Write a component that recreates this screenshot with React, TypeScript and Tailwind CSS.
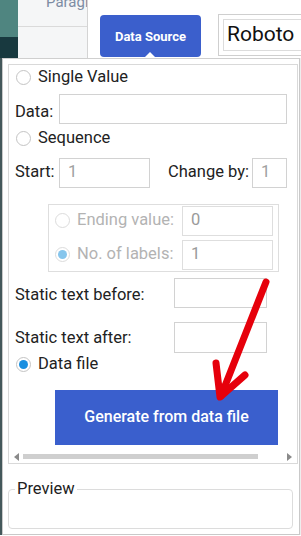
import React from 'react';

function Radio({ checked = false, disabled = false }: { checked?: boolean; disabled?: boolean }) {
  return (
    <span
      className={`w-[15px] h-[15px] shrink-0 rounded-full border flex items-center justify-center bg-white ${
        disabled ? 'border-[#dcdcdc]' : 'border-[#c4c4c4]'
      }`}
    >
      {checked && (
        <span className={`w-[9px] h-[9px] rounded-full ${disabled ? 'bg-[#86c5ec]' : 'bg-[#1a8fe0]'}`} />
      )}
    </span>
  );
}

function Field({ value = '', className = '', disabled = false }: { value?: string; className?: string; disabled?: boolean }) {
  return (
    <div
      className={`h-[30px] border flex items-center px-[8px] text-[16.5px] ${
        disabled ? 'border-[#dedede] text-[#9a9a9a]' : 'border-[#d2d2d2] text-[#a0a0a0]'
      } ${className}`}
    >
      {value}
    </div>
  );
}

// red annotation arrow pointing at the generate button
function RedArrow() {
  return (
    <svg className="absolute left-0 top-0 pointer-events-none" width="301" height="536" viewBox="0 0 301 536">
      <g stroke="#e6000b" strokeWidth="7" strokeLinecap="round" strokeLinejoin="round" fill="none">
        <path d="M266 282 L221 396" />
        <path d="M216 363 L220 397 L245 375" />
      </g>
    </svg>
  );
}

export default function App() {
  return (
    <div className="relative w-[301px] h-[536px] overflow-hidden bg-white font-['Roboto',sans-serif] text-[#222]">
      {/* top toolbar */}
      <div className="flex h-[58px]">
        <div className="w-[18px] flex flex-col">
          <div className="h-[37px] bg-[#4f8580]" />
          <div className="flex-1 bg-[#18393f]" />
        </div>
        <div className="w-[70px] bg-[#f5f6f7] border-r border-[#d4d4d4] overflow-hidden">
          <div className="h-[27px] border-b border-[#dadada] overflow-hidden">
            <div className="mt-[-5px] ml-[28px] text-[15px] leading-none text-[#7d8ca3] whitespace-nowrap">Paragraph</div>
          </div>
        </div>
        <div className="flex-1 flex items-start pt-[15px] pl-[12px] overflow-hidden">
          <button className="relative w-[101px] h-[42px] shrink-0 rounded-[4px] bg-[#3b5fcc] text-white text-[13px] font-bold pt-[2px]">
            Data Source
            <span className="absolute left-[45px] bottom-0 w-0 h-0 border-x-[5px] border-x-transparent border-b-[5px] border-b-white" />
          </button>
          <div className="ml-[17px] mt-[-1px] h-[42px] w-[100px] shrink-0 border border-[#cfcfcf] p-[4px]">
            <div className="h-full border border-[#dcdcdc] flex items-center pl-[3px] text-[21px] text-[#111]">Roboto</div>
          </div>
        </div>
      </div>

      {/* popup */}
      <div className="flex h-[477px]">
        <div className="w-[2px] bg-[#44585b]" />
        <div className="w-[298px] border border-[#c9c9c9] border-t-[#cfcfcf] pl-[5px] pt-[5px] pr-[1px]">
          <div className="h-[400px] border border-[#d9d9d9] flex flex-col text-[16.5px]">
            <div className="h-[24px] flex items-center gap-[7px] pl-[7px]">
              <Radio />
              <span>Single Value</span>
            </div>
            <div className="mt-[5px] flex items-center pl-[6px]">
              <span className="mt-[6px] w-[44px]">Data:</span>
              <Field className="w-[228px]" />
            </div>
            <div className="mt-[2px] h-[24px] flex items-center gap-[7px] pl-[7px]">
              <Radio />
              <span>Sequence</span>
            </div>
            <div className="mt-[7px] flex items-center pl-[6px]">
              <span className="w-[44px]">Start:</span>
              <Field value="1" className="w-[91px]" />
              <span className="ml-[18px] w-[84px]">Change by:</span>
              <Field value="1" className="w-[35px] px-[6px]" />
            </div>
            <div className="mt-[16px] ml-[39px] w-[231px] h-[68px] border border-[#dedede] pt-[1px] pl-[6px] flex flex-col gap-[4px] text-[#b3b3b3]">
              <div className="flex items-center">
                <Radio disabled />
                <span className="ml-[7px] w-[105px]">Ending value:</span>
                <Field value="0" disabled className="w-[91px]" />
              </div>
              <div className="flex items-center">
                <Radio checked disabled />
                <span className="ml-[7px] w-[105px]">No. of labels:</span>
                <Field value="1" disabled className="w-[91px]" />
              </div>
            </div>
            <div className="mt-[6px] flex items-center pl-[6px]">
              <span className="mt-[5px] w-[159px]">Static text before:</span>
              <Field className="w-[93px]" />
            </div>
            <div className="mt-[14px] flex items-center pl-[6px]">
              <span className="mt-[2px] w-[159px]">Static text after:</span>
              <Field className="w-[93px] h-[31px]" />
            </div>
            <div className="h-[24px] flex items-center gap-[7px] pl-[7px]">
              <Radio checked />
              <span>Data file</span>
            </div>
            <button className="mt-[13px] ml-[46px] w-[223px] h-[55px] bg-[#3a5fcd] text-white text-[16px] font-medium">
              Generate from data file
            </button>
            <div className="mt-[8px] flex items-center pl-[5px] pr-[5px] h-[8px]">
              <span className="w-0 h-0 border-y-[4px] border-y-transparent border-r-[5px] border-r-[#8a8a8a]" />
              <span className="ml-[4px] w-[235px] h-[5px] bg-[#cfcfcf]" />
              <span className="ml-auto w-0 h-0 border-y-[4px] border-y-transparent border-l-[5px] border-l-[#8a8a8a]" />
            </div>
          </div>

          <fieldset className="mt-[17px] w-[285px] h-[48px] border border-[#dcdcdc] rounded-[4px] px-[6px]">
            <legend className="px-[2px] text-[16.5px] text-[#222] leading-none">Preview</legend>
          </fieldset>
        </div>
        <div className="flex-1 bg-[#eeeeee]" />
      </div>

      <RedArrow />
    </div>
  );
}
